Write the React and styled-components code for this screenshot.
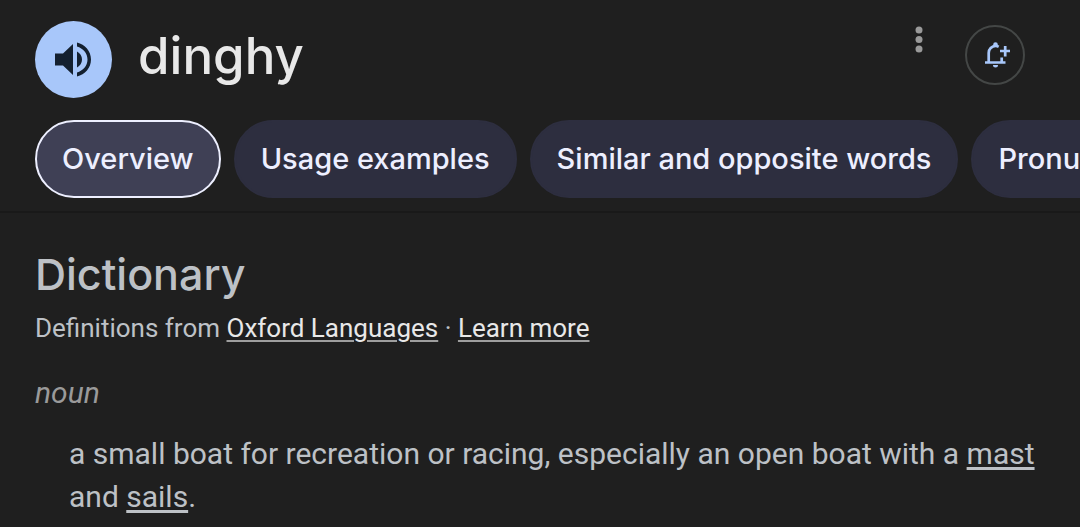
import styled, { createGlobalStyle } from "styled-components";

const TABS = [
  "Overview",
  "Usage examples",
  "Similar and opposite words",
  "Pronunciation",
];

const App = () => {
  return (
    <>
      <GlobalStyle />
      <Header>
        <TitleRow>
          <SpeakButton aria-label="Listen">
            <SpeakerIcon />
          </SpeakButton>
          <Word>dinghy</Word>
          <MenuButton aria-label="More options">
            <DotsIcon />
          </MenuButton>
          <FollowButton aria-label="Follow">
            <BellIcon />
          </FollowButton>
        </TitleRow>
        <Tabs>
          {TABS.map((tab, index) => (
            <Tab key={tab} $active={index === 0}>
              {tab}
            </Tab>
          ))}
        </Tabs>
      </Header>
      <Content>
        <Heading>Dictionary</Heading>
        <Source>
          Definitions from <SourceLink href="#oxford">Oxford Languages</SourceLink>
          {" · "}
          <SourceLink href="#learn">Learn more</SourceLink>
        </Source>
        <PartOfSpeech>noun</PartOfSpeech>
        <Definition>
          a small boat for recreation or racing, especially an open boat with a{" "}
          <WordLink href="#mast">mast</WordLink> and{" "}
          <WordLink href="#sails">sails</WordLink>.
        </Definition>
      </Content>
    </>
  );
};

export default App;

const SpeakerIcon = () => (
  <svg width="40" height="40" viewBox="0 0 40 40" fill="#14202f">
    <path d="M1 13.500h8l10-9.500v31L9 25.500H1z" />
    <path d="M23 11.500c3 1.500 5 4.500 5 8s-2 6.500-5 8z" />
    <path d="M23 2.500c8 1.800 14 8.700 14 17s-6 15.200-14 17v-4c6-1.700 10.500-6.800 10.500-13S29 8.200 23 6.500z" />
  </svg>
);

const DotsIcon = () => (
  <svg width="8" height="28" viewBox="0 0 8 28" fill="#9a9a9a">
    <circle cx="4" cy="4" r="3.500" />
    <circle cx="4" cy="13.500" r="3.500" />
    <circle cx="4" cy="23" r="3.500" />
  </svg>
);

const BellIcon = () => (
  <svg
    width="30"
    height="30"
    viewBox="0 0 30 30"
    fill="none"
    stroke="#a8c7fa"
    strokeWidth="2.700"
  >
    <path d="M5 22.500h20.500M8.700 22.500V13c0-4 3-7 7-7 1 0 2 .2 3 .7M21.700 17.500v5" />
    <path d="M20 11h10.500M25.200 6v10.500" />
    <path
      d="M13.200 4.500a2.300 2.300 0 0 1 4.600 0V6.500h-4.600zM13 25h5a2.500 2.500 0 0 1-5 0z"
      fill="#a8c7fa"
      stroke="none"
    />
  </svg>
);

const GlobalStyle = createGlobalStyle`
  * {
    box-sizing: border-box;
  }

  body {
    margin: 0;
    background-color: #1f1f1f;
    color: #bdc1c6;
    font-family: Roboto, sans-serif;
    overflow-x: hidden;
  }

  h1, h2, p {
    margin: 0;
  }

  button {
    padding: 0;
    cursor: pointer;
  }
`;

const Header = styled.header`
  padding: 20px 0 13px;
  border-bottom: 2px solid #191919;
`;

const TitleRow = styled.div`
  display: flex;
  align-items: flex-start;
  padding: 0 55px 0 35px;
`;

const SpeakButton = styled.button`
  display: grid;
  place-items: center;
  width: 77px;
  height: 77px;
  margin-top: 1px;
  border: none;
  border-radius: 50%;
  background-color: #a8c7fa;
`;

const Word = styled.h1`
  flex: 1;
  margin-left: 26px;
  color: #e8e8e8;
  font-family: Inter, sans-serif;
  font-size: 51px;
  font-weight: 500;
  line-height: 72px;
`;

const MenuButton = styled.button`
  display: grid;
  place-items: center;
  width: 32px;
  height: 40px;
  margin-right: 30px;
  border: none;
  background: none;
`;

const FollowButton = styled.button`
  display: grid;
  place-items: center;
  width: 60px;
  height: 60px;
  margin-top: 5px;
  border: 2px solid #444746;
  border-radius: 50%;
  background: none;
`;

const Tabs = styled.nav`
  display: flex;
  gap: 13px;
  margin-top: 22px;
  padding-left: 35px;
  overflow: hidden;
`;

const Tab = styled.button`
  flex: none;
  height: 78px;
  padding: 0 25px 2px;
  border: 2px solid ${({ $active }) => ($active ? "#edefff" : "#2d2e3f")};
  border-radius: 39px;
  background-color: ${({ $active }) => ($active ? "#3f4055" : "#2d2e3f")};
  color: #edefff;
  font-family: Inter, sans-serif;
  font-size: 29px;
  font-weight: 500;
  white-space: nowrap;
`;

const Content = styled.main`
  padding: 35px 35px 0;
`;

const Heading = styled.h2`
  font-family: Inter, sans-serif;
  font-size: 43px;
  font-weight: 500;
  line-height: 52px;
`;

const Source = styled.p`
  margin-top: 12px;
  font-size: 26px;
  line-height: 32px;
`;

const SourceLink = styled.a`
  color: #e8e8e8;
  text-decoration-color: #9e9e9e;
  text-decoration-thickness: 2px;
  text-underline-offset: 3px;
`;

const PartOfSpeech = styled.p`
  margin-top: 32px;
  color: #9a9a9a;
  font-size: 30px;
  font-style: italic;
  line-height: 34px;
`;

const Definition = styled.p`
  margin-top: 22px;
  padding-left: 34px;
  font-size: 30px;
  line-height: 43px;
`;

const WordLink = styled.a`
  color: inherit;
  text-decoration-thickness: 3px;
  text-underline-offset: 3px;
`;
